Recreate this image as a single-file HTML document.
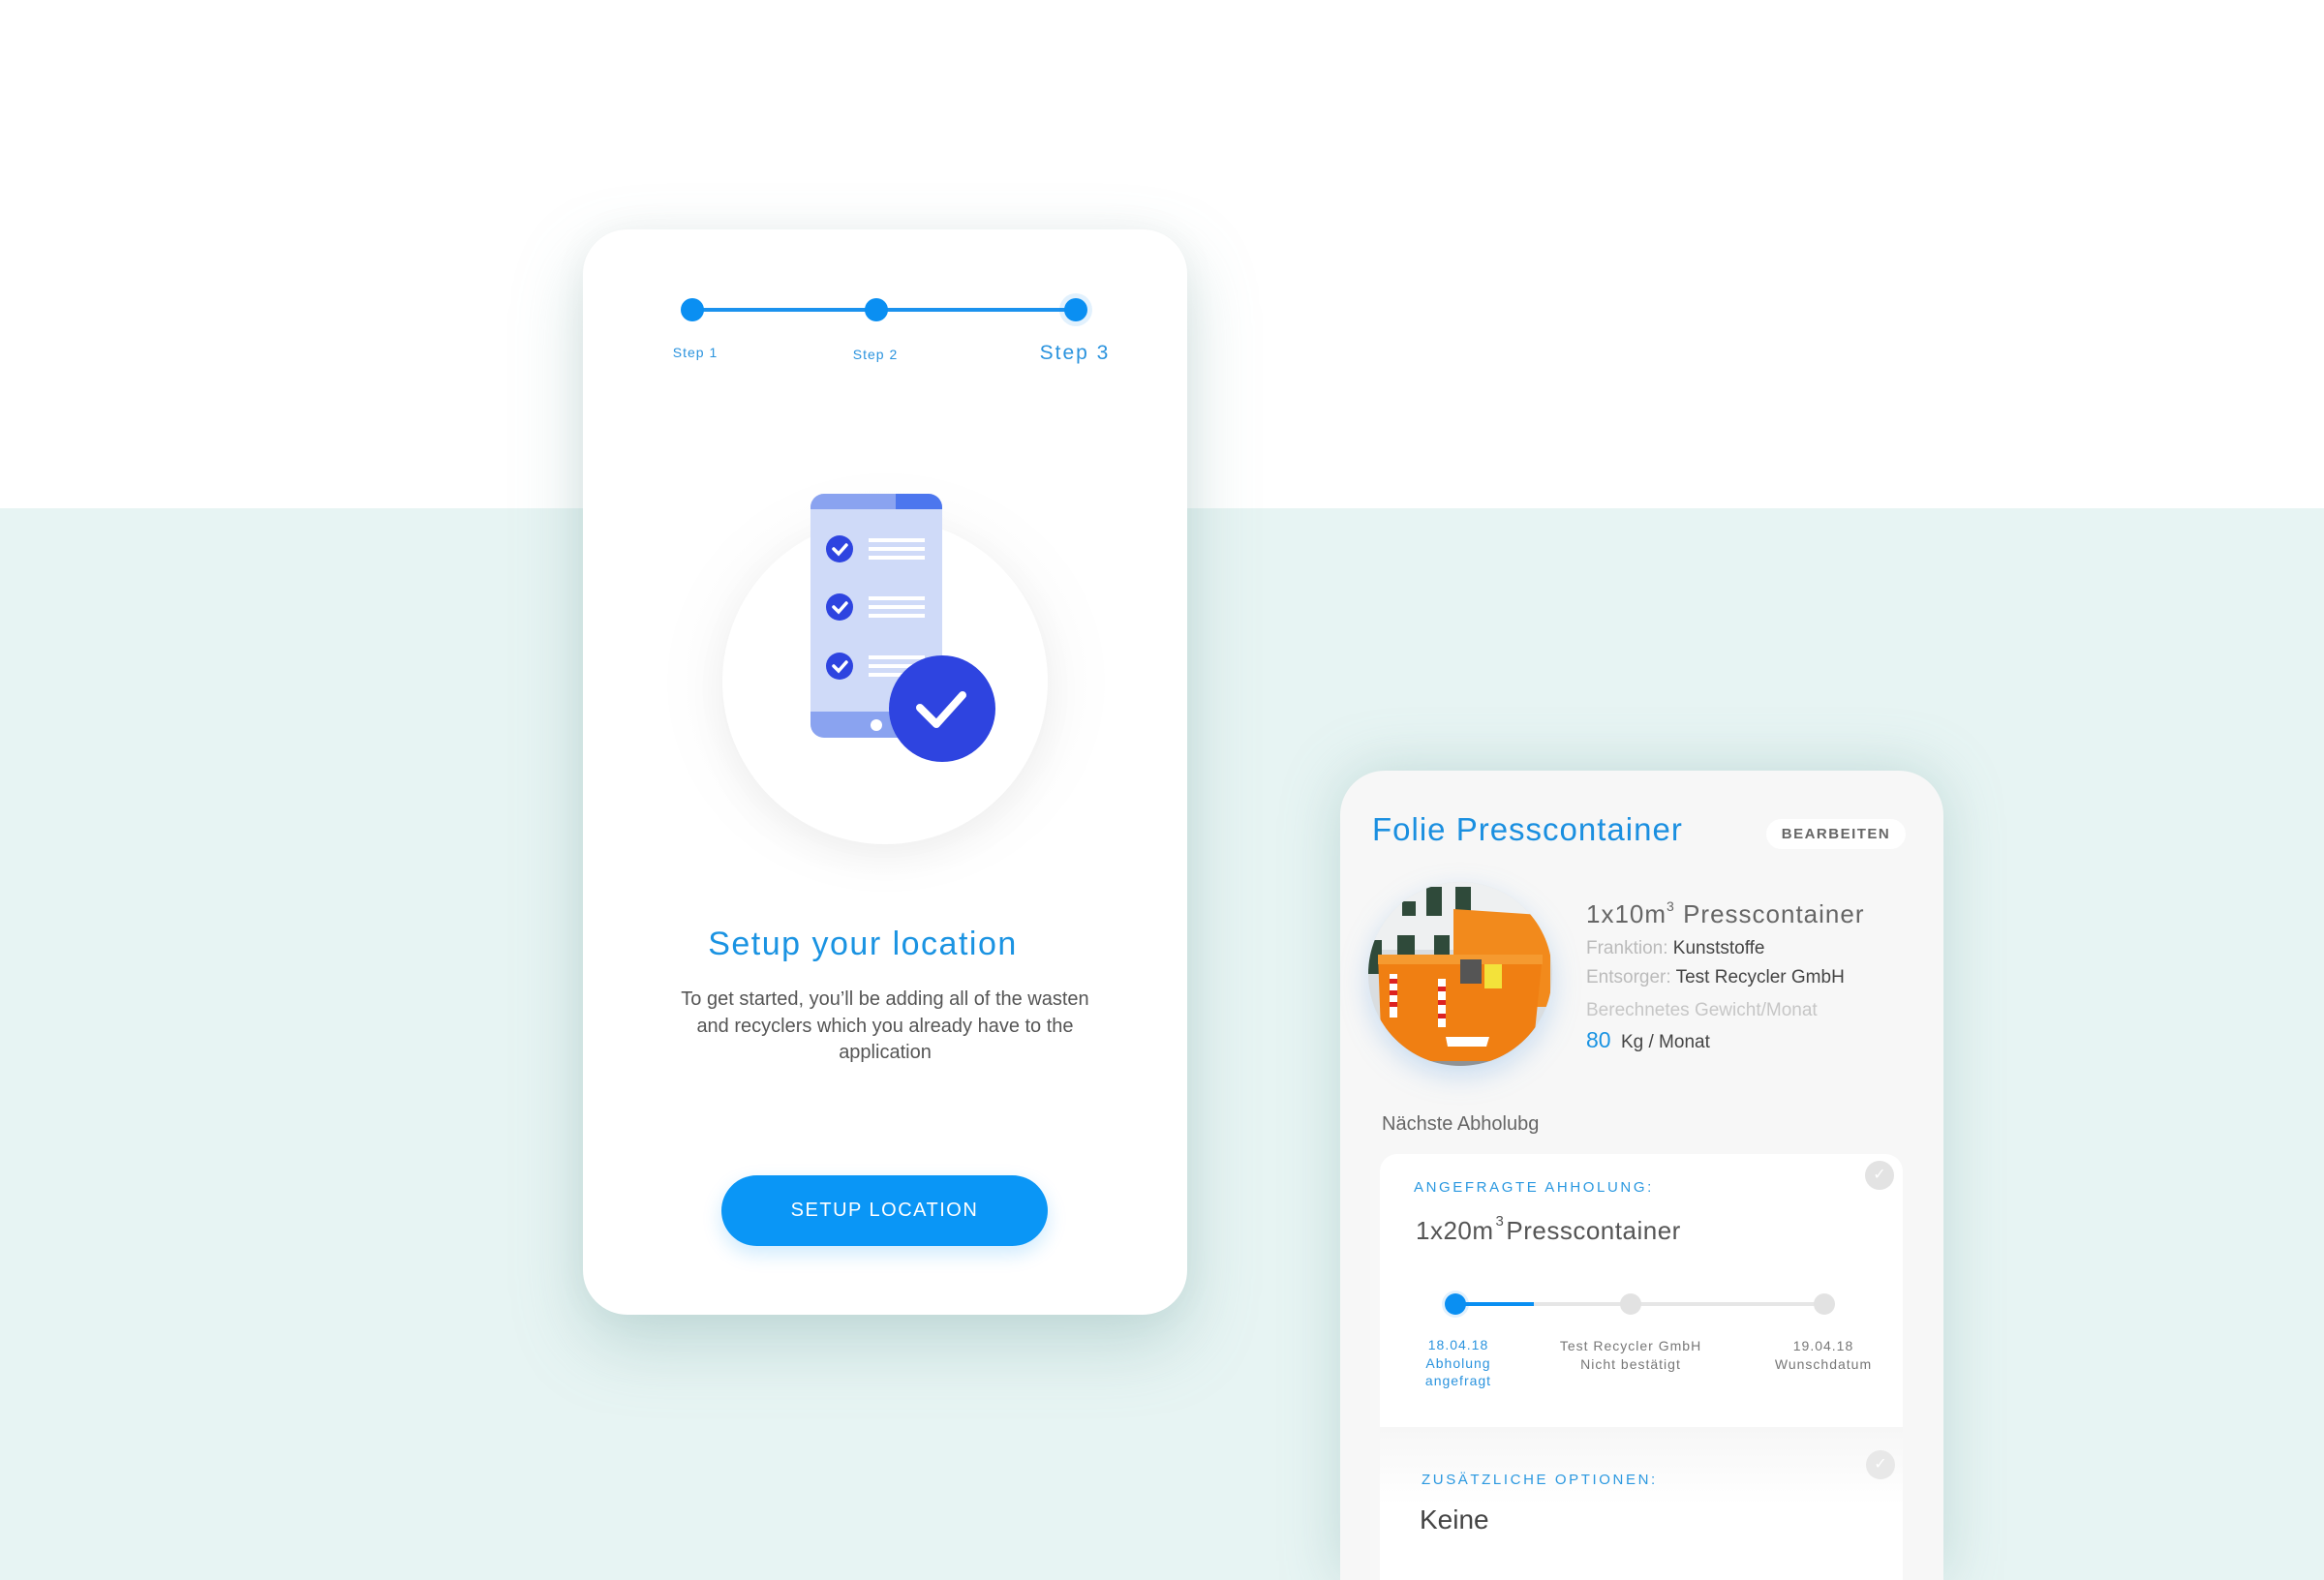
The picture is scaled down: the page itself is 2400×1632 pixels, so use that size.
<!DOCTYPE html>
<html style="width:2400px;height:1632px;overflow:hidden"><head><meta charset="utf-8"><style>
*{margin:0;padding:0;box-sizing:border-box}
body{width:2400px;height:1632px;overflow:hidden;background:#fff;font-family:"Liberation Sans",Arial,sans-serif;position:relative}
.mint{position:absolute;left:0;top:525px;width:2400px;height:1107px;background:#e7f4f3}
.abs{position:absolute}
.card1{left:602px;top:237px;width:624px;height:1121px;background:#fff;border-radius:46px;box-shadow:0 30px 70px rgba(120,170,165,.35),0 0 40px rgba(0,0,0,.04)}
.card2{left:1384px;top:796px;width:623px;height:836px;background:#f7f7f7;border-radius:46px 46px 0 0;box-shadow:0 0 60px rgba(120,170,165,.35)}
.lbl{color:#2a93de;position:absolute;white-space:nowrap;transform:translateX(-50%)}
.c{text-align:center;transform:translateX(-50%);white-space:nowrap}
</style></head><body>
<div class="mint"></div>

<div class="abs card1"></div>
<div class="abs" style="left:715px;top:318px;width:396px;height:4px;background:#1b92ee"></div>
<div class="abs" style="left:1094px;top:303px;width:34px;height:34px;border-radius:50%;background:rgba(20,140,240,.12)"></div>
<div class="abs" style="left:703px;top:308px;width:24px;height:24px;border-radius:50%;background:#0a8ff2"></div>
<div class="abs" style="left:893px;top:308px;width:24px;height:24px;border-radius:50%;background:#0a8ff2"></div>
<div class="abs" style="left:1099px;top:308px;width:24px;height:24px;border-radius:50%;background:#0a8ff2"></div>
<div class="lbl" style="left:718px;top:356px;font-size:14px;letter-spacing:1px">Step 1</div>
<div class="lbl" style="left:904px;top:358px;font-size:14px;letter-spacing:1px">Step 2</div>
<div class="lbl" style="left:1110px;top:353px;font-size:21px;letter-spacing:2px">Step 3</div>

<div class="abs" style="left:680px;top:480px;width:470px;height:450px;border-radius:50%;background:radial-gradient(closest-side,rgba(0,0,0,.05),rgba(0,0,0,0))"></div>
<div class="abs" style="left:746px;top:536px;width:336px;height:336px;border-radius:50%;background:#fff;box-shadow:0 10px 40px rgba(0,0,0,.06)"></div>
<svg class="abs" style="left:830px;top:505px" width="200" height="290" viewBox="0 0 200 290">
<rect x="7" y="5" width="136" height="252" rx="14" fill="#cfdaf8"/>
<path d="M21 5h100v16H7v-2a14 14 0 0 1 14-14z" fill="#8aa3f0"/>
<path d="M95 5h34a14 14 0 0 1 14 14v2H95z" fill="#4c76ee"/>
<path d="M7 230h136v13a14 14 0 0 1-14 14H21a14 14 0 0 1-14-14z" fill="#8aa3f0"/>
<circle cx="75" cy="244" r="6" fill="#fff"/>
<g fill="#2e44e0"><circle cx="37" cy="62" r="14"/><circle cx="37" cy="122" r="14"/><circle cx="37" cy="183" r="14"/></g>
<g stroke="#fff" stroke-width="3.5" fill="none" stroke-linecap="round"><path d="M31 62l5 5 8-9"/><path d="M31 122l5 5 8-9"/><path d="M31 183l5 5 8-9"/></g>
<g fill="#fff"><rect x="67" y="51" width="58" height="4"/><rect x="67" y="60" width="58" height="4"/><rect x="67" y="69" width="58" height="4"/>
<rect x="67" y="111" width="58" height="4"/><rect x="67" y="120" width="58" height="4"/><rect x="67" y="129" width="58" height="4"/>
<rect x="67" y="172" width="58" height="4"/><rect x="67" y="181" width="58" height="4"/><rect x="67" y="190" width="58" height="4"/></g>
<circle cx="143" cy="227" r="55" fill="#2e44e0"/>
<path d="M120 226l17 17 27-30" stroke="#fff" stroke-width="8" fill="none" stroke-linecap="round" stroke-linejoin="round"/>
</svg>

<div class="abs c" style="left:891px;top:956px;font-size:34px;color:#1a93e2;letter-spacing:1.5px">Setup your location</div>
<div class="abs" style="left:664px;top:1019px;width:500px;text-align:center;font-size:20px;line-height:27.5px;color:#555">To get started, you’ll be adding all of the wasten<br>and recyclers which you already have to the<br>application</div>
<div class="abs" style="left:745px;top:1214px;width:337px;height:73px;border-radius:37px;background:#0a96f6;box-shadow:0 8px 20px rgba(10,150,246,.2);color:#fff;font-size:20px;letter-spacing:1.5px;line-height:73px;text-align:center">SETUP LOCATION</div>

<div class="abs card2"></div>
<div class="abs" style="left:1417px;top:838px;font-size:33px;color:#1a8fe0;letter-spacing:1px">Folie Presscontainer</div>
<div class="abs" style="left:1824px;top:846px;width:144px;height:31px;border-radius:16px;background:#fff;text-align:center;line-height:31px;font-size:15px;font-weight:bold;color:#666;letter-spacing:1.5px">BEARBEITEN</div>

<svg class="abs" style="left:1413px;top:911px;filter:drop-shadow(0 10px 14px rgba(60,140,220,.25))" width="190" height="190" viewBox="0 0 190 190">
<defs><clipPath id="cp"><circle cx="95" cy="95" r="95"/></clipPath></defs>
<g clip-path="url(#cp)">
<rect width="190" height="190" fill="#d9dde0"/>
<rect x="0" y="0" width="190" height="70" fill="#eef0f1"/>
<g fill="#2f4a3a"><rect x="60" y="5" width="16" height="30"/><rect x="90" y="5" width="16" height="28"/><rect x="30" y="55" width="18" height="40"/><rect x="0" y="60" width="14" height="35"/><rect x="68" y="55" width="16" height="35"/><rect x="35" y="20" width="14" height="15"/></g>
<rect x="0" y="150" width="190" height="40" fill="#8f9294"/>
<path d="M88 28l90 6 10 15v80H88z" fill="#f28a1c"/>
<path d="M10 75h170l-8 80-35 30H45l-32-30z" fill="#f07f12"/>
<path d="M10 75h170v10H10z" fill="#f59a30"/>
<g fill="#fff"><path d="M22 95h8v45h-8z"/><path d="M72 100h8v50h-8z"/></g>
<g fill="#d22"><path d="M22 100h8v5h-8zM22 112h8v5h-8zM22 124h8v5h-8zM72 108h8v5h-8zM72 122h8v5h-8zM72 136h8v5h-8z"/></g>
<rect x="120" y="85" width="18" height="25" fill="#f3e23a"/>
<rect x="95" y="80" width="22" height="25" fill="#555"/>
<path d="M80 160h45l-3 10H82z" fill="#fff"/>
</g></svg>

<div class="abs" style="left:1638px;top:929px;font-size:26px;color:#666;letter-spacing:1px">1x10m<sup style="font-size:14px;position:relative;top:-2px">3</sup> Presscontainer</div>
<div class="abs" style="left:1638px;top:969px;font-size:19px;color:#bbb">Franktion: <span style="color:#444">Kunststoffe</span></div>
<div class="abs" style="left:1638px;top:999px;font-size:19px;color:#bbb">Entsorger: <span style="color:#444">Test Recycler GmbH</span></div>
<div class="abs" style="left:1638px;top:1033px;font-size:19px;color:#c6c6c6">Berechnetes Gewicht/Monat</div>
<div class="abs" style="left:1638px;top:1061px;font-size:23px;color:#1a93e2">80 <span style="font-size:19px;color:#444;margin-left:4px">Kg / Monat</span></div>
<div class="abs" style="left:1427px;top:1150px;font-size:20px;color:#666">Nächste Abholubg</div>

<div class="abs" style="left:1425px;top:1192px;width:540px;height:282px;border-radius:18px 18px 0 0;background:#fff"></div>
<div class="abs" style="left:1926px;top:1199px;width:30px;height:30px;border-radius:50%;background:#e3e3e3;color:#fff;text-align:center;line-height:30px;font-size:16px">✓</div>
<div class="abs" style="left:1460px;top:1218px;font-size:15px;color:#2a98e0;letter-spacing:2.6px">ANGEFRAGTE AHHOLUNG:</div>
<div class="abs" style="left:1462px;top:1256px;font-size:26px;color:#555;letter-spacing:.5px">1x20m<sup style="font-size:15px;position:relative;top:-4px;margin:0 2px">3</sup>Presscontainer</div>
<div class="abs" style="left:1503px;top:1345px;width:381px;height:4px;background:#e6e6e6"></div>
<div class="abs" style="left:1503px;top:1345px;width:81px;height:4px;background:#0a8ff2"></div>
<div class="abs" style="left:1489px;top:1333px;width:28px;height:28px;border-radius:50%;background:rgba(20,140,240,.12)"></div>
<div class="abs" style="left:1492px;top:1336px;width:22px;height:22px;border-radius:50%;background:#0a8ff2"></div>
<div class="abs" style="left:1673px;top:1336px;width:22px;height:22px;border-radius:50%;background:#e2e2e2"></div>
<div class="abs" style="left:1873px;top:1336px;width:22px;height:22px;border-radius:50%;background:#e2e2e2"></div>
<div class="abs c" style="left:1506px;top:1380px;font-size:14px;line-height:18.5px;color:#2a93de;letter-spacing:1px">18.04.18<br>Abholung<br>angefragt</div>
<div class="abs c" style="left:1684px;top:1381px;font-size:14px;line-height:18.5px;color:#777;letter-spacing:1px">Test Recycler GmbH<br>Nicht bestätigt</div>
<div class="abs c" style="left:1883px;top:1381px;font-size:14px;line-height:18.5px;color:#777;letter-spacing:1px">19.04.18<br>Wunschdatum</div>

<div class="abs" style="left:1425px;top:1474px;width:540px;height:158px;background:linear-gradient(#f6f6f6,#fff 80px)"></div>
<div class="abs" style="left:1927px;top:1498px;width:30px;height:30px;border-radius:50%;background:#e8e8e8;color:#fff;text-align:center;line-height:30px;font-size:16px">✓</div>
<div class="abs" style="left:1468px;top:1520px;font-size:15px;color:#2a98e0;letter-spacing:2.6px">ZUSÄTZLICHE OPTIONEN:</div>
<div class="abs" style="left:1466px;top:1554px;font-size:28px;color:#444">Keine</div>
</body></html>
